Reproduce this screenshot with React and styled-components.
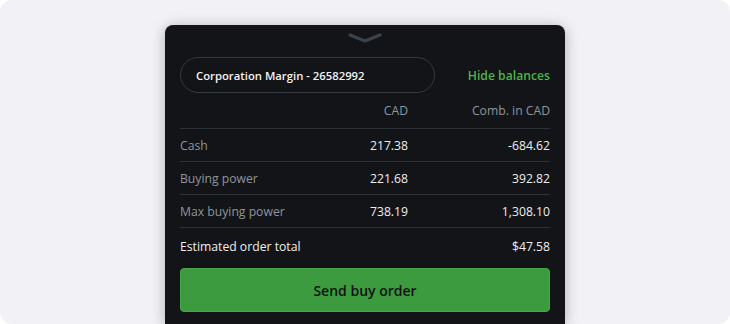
import React from "react";
import styled, { createGlobalStyle } from "styled-components";

const GlobalStyle = createGlobalStyle`
  html, body {
    margin: 0;
    padding: 0;
    background: #ffffff;
    font-family: "Open Sans", "Noto Sans", sans-serif;
  }
`;

const Page = styled.div`
  width: 730px;
  height: 324px;
  background: #f1f1f6;
  border-radius: 12px;
  overflow: hidden;
  display: flex;
  justify-content: center;
  padding-top: 25px;
  box-sizing: border-box;
`;

const Panel = styled.div`
  width: 400px;
  background: #131418;
  border-radius: 8px 8px 0 0;
  box-shadow: 0 2px 14px rgba(0, 0, 0, 0.28);
  padding: 0 15px;
  box-sizing: border-box;
  display: flex;
  flex-direction: column;
`;

const Handle = styled.div`
  height: 32px;
  display: flex;
  justify-content: center;
  padding-top: 7px;
  box-sizing: border-box;
`;

const AccountRow = styled.div`
  display: flex;
  align-items: center;
  justify-content: space-between;
`;

const AccountPill = styled.div`
  width: 255px;
  height: 36px;
  box-sizing: border-box;
  border: 1px solid #343a3f;
  border-radius: 18px;
  display: flex;
  align-items: center;
  padding-left: 15px;
  color: #f2f2f2;
  font-size: 11.3px;
  font-weight: 600;
`;

const LinkButton = styled.span`
  color: #4fb24f;
  font-size: 12.2px;
  font-weight: 600;
`;

const Row = styled.div`
  display: grid;
  grid-template-columns: 1fr 110px 142px;
  align-items: center;
  height: ${(p) => p.$height || 33}px;
  border-bottom: 1px solid #2b3135;
  box-sizing: border-box;
  font-size: 12.2px;
`;

const TotalRow = styled.div`
  display: flex;
  justify-content: space-between;
  align-items: center;
  height: 36px;
  font-size: 12.2px;
`;

const Label = styled.span`
  color: ${(p) => (p.$bright ? "#eeeeee" : "#8e959c")};
`;

const Value = styled.span`
  text-align: right;
  color: ${(p) => (p.$muted ? "#8e959c" : "#eeeeee")};
`;

const SendButton = styled.button`
  margin-top: 4px;
  height: 44px;
  width: 100%;
  background: #3b9b3e;
  border: 1px solid #46a849;
  border-radius: 4px;
  color: #121212;
  font-family: inherit;
  font-size: 14px;
  font-weight: 600;
  cursor: pointer;
`;

const rows = [
  { label: "Cash", cad: "217.38", comb: "-684.62" },
  { label: "Buying power", cad: "221.68", comb: "392.82" },
  { label: "Max buying power", cad: "738.19", comb: "1,308.10" },
];

const App = () => (
  <Page>
    <GlobalStyle />
    <Panel>
      <Handle>
        <svg width="36" height="12" viewBox="0 0 36 12">
          <path
            d="M3 3 L18 9 L33 3"
            fill="none"
            stroke="#3a434d"
            strokeWidth="3.2"
            strokeLinecap="round"
            strokeLinejoin="round"
          />
        </svg>
      </Handle>
      <AccountRow>
        <AccountPill>Corporation Margin - 26582992</AccountPill>
        <LinkButton>Hide balances</LinkButton>
      </AccountRow>
      <Row $height={36}>
        <span />
        <Value $muted>CAD</Value>
        <Value $muted>Comb. in CAD</Value>
      </Row>
      {rows.map((r) => (
        <Row key={r.label}>
          <Label>{r.label}</Label>
          <Value>{r.cad}</Value>
          <Value>{r.comb}</Value>
        </Row>
      ))}
      <TotalRow>
        <Label $bright>Estimated order total</Label>
        <Value>$47.58</Value>
      </TotalRow>
      <SendButton>Send buy order</SendButton>
    </Panel>
  </Page>
);

export default App;
